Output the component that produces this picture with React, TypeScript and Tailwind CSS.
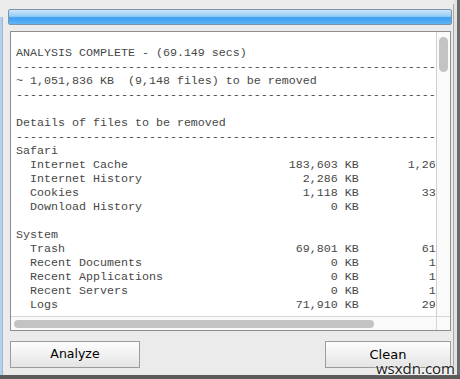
import React from "react";

const dash = "-".repeat(90);
const row = (l: string, kb: string, f: string) =>
  ("  " + l).padEnd(36) + kb.padStart(10) + " KB" + f.padStart(12) + " files";

const lines: string[] = [
  "ANALYSIS COMPLETE - (69.149 secs)",
  dash,
  "~ 1,051,836 KB  (9,148 files) to be removed",
  dash,
  "",
  "Details of files to be removed",
  dash,
  "Safari",
  row("Internet Cache", "183,603", "1,265"),
  row("Internet History", "2,286", "9"),
  row("Cookies", "1,118", "337"),
  row("Download History", "0", "0"),
  "",
  "System",
  row("Trash", "69,801", "612"),
  row("Recent Documents", "0", "12"),
  row("Recent Applications", "0", "15"),
  row("Recent Servers", "0", "10"),
  row("Logs", "71,910", "293"),
  "",
];

export default function App() {
  return (
    <div className="relative w-[460px] h-[379px] bg-[#ebebeb] flex flex-col overflow-hidden">
      <div className="flex flex-1 min-h-0">
        <div className="w-[3px] mt-[17px] bg-[#b3d1ee] border-r border-[#9fb8cf]" />
        <div className="flex-1 flex flex-col">
          <div className="mt-[9px] ml-[5px] w-[444px] h-[16px] rounded-[2px] border border-[#7d95ab] bg-[linear-gradient(to_bottom,#cde6fb,#95ccf7_45%,#3d9ef1_55%,#5fb5f6)]" />
          <div className="mt-[6px] ml-[7px] w-[441px] h-[300px] border border-[#8e8e8e] bg-white flex flex-col">
            <div className="flex flex-1 min-h-0">
              <div className="flex-1 overflow-hidden pt-[14px] pl-[5px] font-['Liberation_Mono','Courier_New',monospace] text-[11.67px] leading-[14px] text-[#474747] whitespace-pre">
                {lines.map((t, i) => (
                  <div key={i} className="h-[14px]">{t}</div>
                ))}
              </div>
              <div className="w-[14px] border-l border-[#cfcfcf] bg-[#fafafa] pt-[5px] flex justify-center">
                <div className="w-[9px] h-[35px] rounded-full bg-[#c3c3c3]" />
              </div>
            </div>
            <div className="h-[14px] flex border-t border-[#d6d6d6] bg-[#fafafa]">
              <div className="flex-1 pl-[3px] pt-[3px]">
                <div className="w-[360px] h-[8px] rounded-full bg-[#c3c3c3]" />
              </div>
              <div className="w-[14px] border-l border-[#d6d6d6]" />
            </div>
          </div>
          <div className="mt-[10px] ml-[7px] w-[441px] flex justify-between">
            <button className="w-[130px] h-[27px] border border-[#9c9c9c] bg-[linear-gradient(to_bottom,#fdfdfd,#e4e4e4)] font-['DejaVu_Sans',sans-serif] text-[12.5px] text-black">
              Analyze
            </button>
            <button className="w-[126px] h-[27px] border border-[#9c9c9c] bg-[linear-gradient(to_bottom,#fdfdfd,#e4e4e4)] font-['DejaVu_Sans',sans-serif] text-[13px] text-black">
              Clean
            </button>
          </div>
        </div>
        <div className="w-[7px] flex">
          <div className="w-[1px] bg-[#a8a8a8] mt-[4px]" />
          <div className="w-[3px] bg-[#e2e2e2]" />
          <div className="w-[3px] bg-[#6a6a6a]" />
        </div>
      </div>
      <div className="h-[4px] bg-[#5a5a5a]" />
      <div className="absolute right-[5px] bottom-[3px] font-['Open_Sans',sans-serif] text-[15px] leading-[16px] text-[#1a1a1a] [text-shadow:0_0_2px_#fff,0_0_2px_#fff]">
        wsxdn.com
      </div>
    </div>
  );
}
